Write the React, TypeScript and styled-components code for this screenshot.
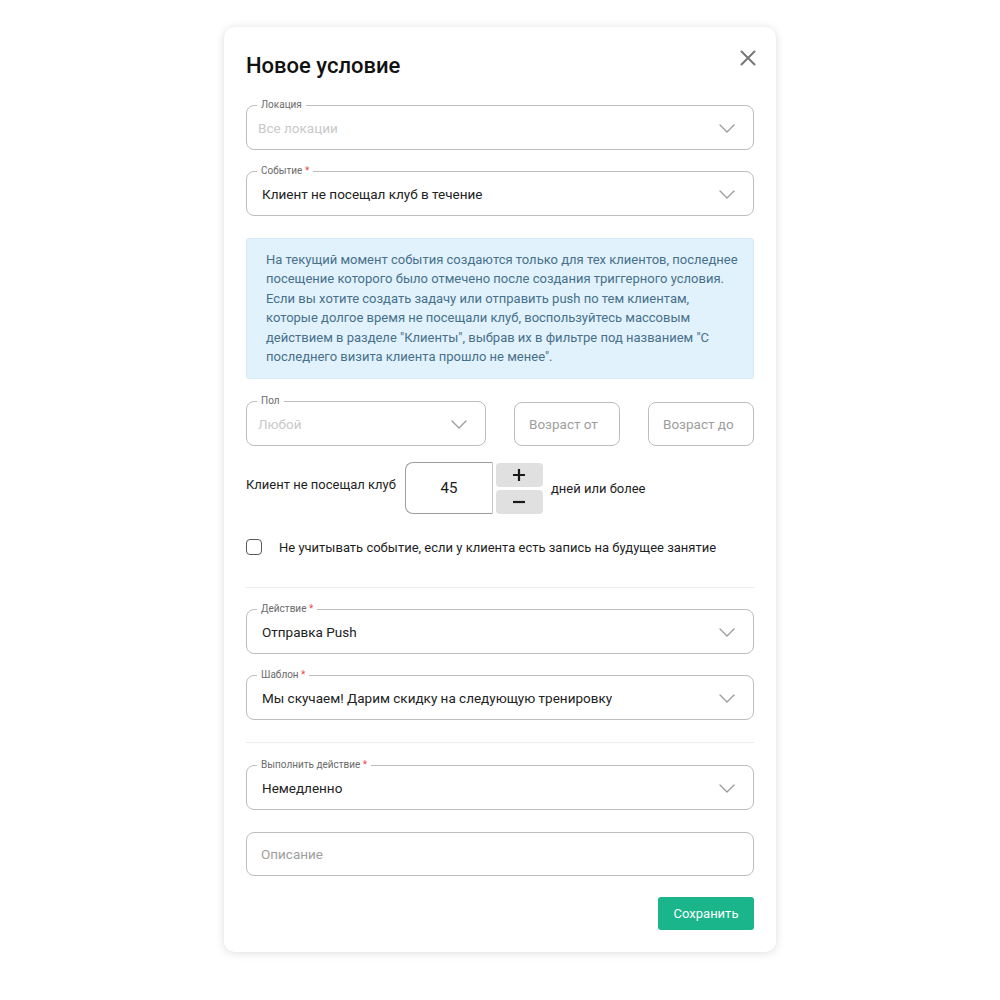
import React from 'react'
import styled, { createGlobalStyle } from 'styled-components'

const GlobalStyle = createGlobalStyle`
  body {
    margin: 0;
    background: #fff;
    font-family: Roboto, "Noto Sans", Arial, sans-serif;
    color: #212121;
  }
`

const Page = styled.div`
  display: flex;
  justify-content: center;
  padding: 27px 0 40px;
`

const Card = styled.div`
  width: 552px;
  box-sizing: border-box;
  padding: 25px 22px 22px;
  background: #fff;
  border-radius: 10px;
  box-shadow: 0 1px 10px rgba(0, 0, 0, 0.13), 0 0 1px rgba(0, 0, 0, 0.08);
  display: flex;
  flex-direction: column;
`

const Header = styled.div`
  display: flex;
  justify-content: space-between;
  align-items: flex-start;
`

const Title = styled.h1`
  margin: 0;
  font-size: 22px;
  line-height: 28px;
  font-weight: 500;
  color: #111;
`

const CloseButton = styled.button`
  border: 0;
  background: none;
  padding: 0;
  margin: -2px -2px 0 0;
  color: #777;
  display: flex;
  cursor: pointer;
`

const Block = styled.div<{ $mt: number }>`
  margin-top: ${p => p.$mt}px;
`

const Outline = styled.fieldset<{ $w?: number }>`
  margin: 0;
  padding: 0 10px 4px 10px;
  border: 1px solid #bdbdbd;
  border-radius: 8px;
  min-width: 0;
  width: ${p => (p.$w ? `${p.$w}px` : 'auto')};
  box-sizing: border-box;
`

const Legend = styled.legend`
  padding: 0 4px;
  font-size: 10px;
  line-height: 12px;
  color: #6b6b6b;
`

const Star = styled.span`
  color: #f04b4b;
`

const SelectRow = styled.div<{ $placeholder?: boolean }>`
  height: 33px;
  padding-bottom: 1px;
  display: flex;
  align-items: center;
  justify-content: space-between;
  padding-left: ${p => (p.$placeholder ? 1 : 5)}px;
  font-size: 13.5px;
  color: ${p => (p.$placeholder ? '#c9c9c9' : '#222')};
  svg {
    color: #9a9a9a;
    margin: 1px 8px 0 0;
    flex-shrink: 0;
  }
`

const PlainBox = styled.div<{ $w?: number; $pl: number }>`
  height: 44px;
  box-sizing: border-box;
  width: ${p => (p.$w ? `${p.$w}px` : 'auto')};
  border: 1px solid #bdbdbd;
  border-radius: 8px;
  display: flex;
  align-items: center;
  padding-left: ${p => p.$pl}px;
  font-size: 13.5px;
  color: #9e9e9e;
`

const Info = styled.div`
  background: #e1f2fc;
  border: 1px solid #d3eaf8;
  border-radius: 3px;
  padding: 11px 12px 12px 19px;
  font-size: 13px;
  line-height: 19.4px;
  color: #47708a;
`

const FilterRow = styled.div`
  display: flex;
  align-items: flex-end;
  justify-content: space-between;
`

const StepperRow = styled.div`
  display: flex;
  align-items: center;
  font-size: 13px;
  color: #1e1e1e;
`

const StepLabel = styled.span`
  margin: -7px 9px 0 0;
`

const Count = styled.div`
  width: 88px;
  height: 52px;
  box-sizing: border-box;
  border: 1px solid #9e9e9e;
  border-right-color: #c4c4c4;
  border-radius: 8px 0 0 8px;
  display: flex;
  align-items: center;
  justify-content: center;
  font-size: 15px;
  color: #1a1a1a;
`

const StepButtons = styled.div`
  display: flex;
  flex-direction: column;
  gap: 3px;
  margin: 0 8px 0 3px;
`

const StepButton = styled.button`
  width: 47px;
  height: 24px;
  border: 0;
  border-radius: 4px;
  background: #e0e0e0;
  display: flex;
  align-items: center;
  justify-content: center;
  padding: 0;
  color: #1a1a1a;
`

const CheckRow = styled.label`
  display: flex;
  align-items: center;
  gap: 17px;
  font-size: 13px;
  color: #1e1e1e;
`

const Box = styled.span`
  width: 16px;
  height: 16px;
  box-sizing: border-box;
  border: 1.5px solid #5a5a5a;
  border-radius: 4px;
`

const Divider = styled.hr`
  border: 0;
  height: 1px;
  background: #ececec;
  margin: 0;
`

const Footer = styled.div`
  display: flex;
  justify-content: flex-end;
`

const SaveButton = styled.button`
  width: 96px;
  height: 33px;
  border: 0;
  border-radius: 3px;
  background: #1bb58b;
  color: #fff;
  font-family: inherit;
  font-size: 13px;
  cursor: pointer;
`

const Chevron = () => (
  <svg width="16" height="9" viewBox="0 0 16 9" fill="none">
    <path d="M1 1l7 7 7-7" stroke="currentColor" strokeWidth="1.3" strokeLinecap="round" strokeLinejoin="round" />
  </svg>
)

const CloseIcon = () => (
  <svg width="16" height="16" viewBox="0 0 16 16" fill="none">
    <path d="M1.5 1.5l13 13M14.5 1.5l-13 13" stroke="currentColor" strokeWidth="2" strokeLinecap="round" />
  </svg>
)

const PlusIcon = () => (
  <svg width="14" height="14" viewBox="0 0 14 14">
    <path d="M7 1v12M1 7h12" stroke="currentColor" strokeWidth="2.2" />
  </svg>
)

const MinusIcon = () => (
  <svg width="14" height="14" viewBox="0 0 14 14">
    <path d="M1 7h12" stroke="currentColor" strokeWidth="2.2" />
  </svg>
)

type SelectProps = {
  label: string
  value: string
  required?: boolean
  placeholder?: boolean
  width?: number
}

const Select = ({ label, value, required, placeholder, width }: SelectProps) => (
  <Outline $w={width}>
    <Legend>
      {label}
      {required && <Star> *</Star>}
    </Legend>
    <SelectRow $placeholder={placeholder}>
      <span>{value}</span>
      <Chevron />
    </SelectRow>
  </Outline>
)

export default function App() {
  return (
    <Page>
      <GlobalStyle />
      <Card>
        <Header>
          <Title>Новое условие</Title>
          <CloseButton aria-label="close">
            <CloseIcon />
          </CloseButton>
        </Header>

        <Block $mt={19}>
          <Select label="Локация" value="Все локации" placeholder />
        </Block>
        <Block $mt={15}>
          <Select label="Событие" value="Клиент не посещал клуб в течение" required />
        </Block>

        <Block $mt={22}>
          <Info>
            На текущий момент события создаются только для тех клиентов, последнее
            <br />
            посещение которого было отмечено после создания триггерного условия.
            <br />
            Если вы хотите создать задачу или отправить push по тем клиентам,
            <br />
            которые долгое время не посещали клуб, воспользуйтесь массовым
            <br />
            действием в разделе "Клиенты", выбрав их в фильтре под названием "С
            <br />
            последнего визита клиента прошло не менее".
          </Info>
        </Block>

        <Block $mt={16}>
          <FilterRow>
            <Select label="Пол" value="Любой" placeholder width={240} />
            <PlainBox $w={106} $pl={14}>Возраст от</PlainBox>
            <PlainBox $w={106} $pl={14}>Возраст до</PlainBox>
          </FilterRow>
        </Block>

        <Block $mt={16}>
          <StepperRow>
            <StepLabel>Клиент не посещал клуб</StepLabel>
            <Count>45</Count>
            <StepButtons>
              <StepButton aria-label="plus">
                <PlusIcon />
              </StepButton>
              <StepButton aria-label="minus">
                <MinusIcon />
              </StepButton>
            </StepButtons>
            <span>дней или более</span>
          </StepperRow>
        </Block>

        <Block $mt={25}>
          <CheckRow>
            <Box />
            Не учитывать событие, если у клиента есть запись на будущее занятие
          </CheckRow>
        </Block>

        <Block $mt={32}>
          <Divider />
        </Block>

        <Block $mt={15}>
          <Select label="Действие" value="Отправка Push" required />
        </Block>
        <Block $mt={15}>
          <Select label="Шаблон" value="Мы скучаем! Дарим скидку на следующую тренировку" required />
        </Block>

        <Block $mt={22}>
          <Divider />
        </Block>

        <Block $mt={16}>
          <Select label="Выполнить действие" value="Немедленно" required />
        </Block>
        <Block $mt={22}>
          <PlainBox $pl={14}>Описание</PlainBox>
        </Block>

        <Block $mt={21}>
          <Footer>
            <SaveButton>Сохранить</SaveButton>
          </Footer>
        </Block>
      </Card>
    </Page>
  )
}
